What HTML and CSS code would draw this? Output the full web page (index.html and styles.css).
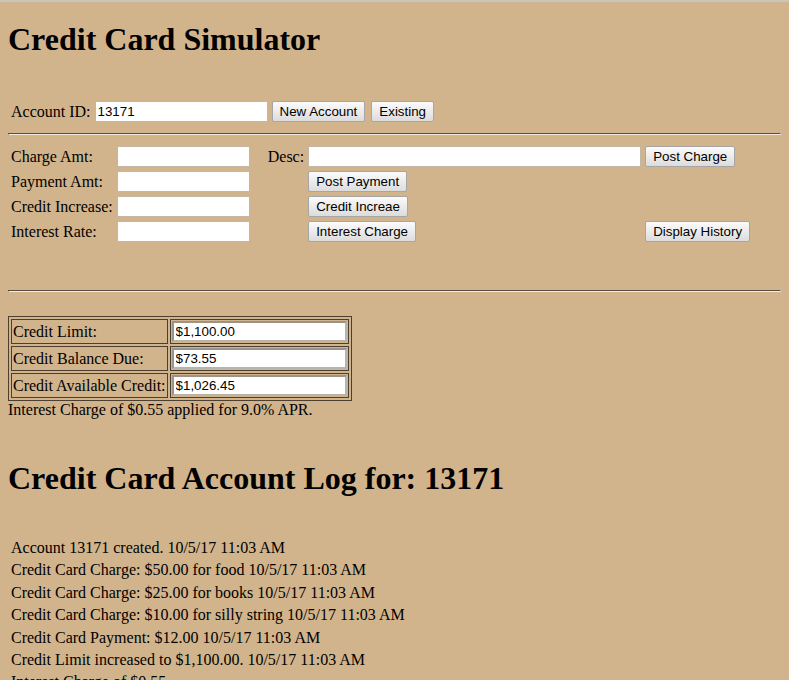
FILE: index.html
```html
<!DOCTYPE html>
<html>
<head>
<meta charset="utf-8">
<title>Credit Card Simulator</title>
<link rel="stylesheet" href="styles.css">
</head>
<body>
<h1 class="title">Credit Card Simulator</h1>
<table class="grid acct">
  <tr>
    <td>Account ID:</td>
    <td><input class="in in-acct" type="text" value="13171"></td>
    <td class="btns"><button class="btn btn-inline">New Account</button> <button class="btn btn-inline btn-gap">Existing</button></td>
  </tr>
</table>
<hr class="rule">
<table class="grid form">
  <tr>
    <td>Charge Amt:</td>
    <td><input class="in in-amt" type="text"></td>
    <td class="desc">Desc:</td>
    <td><input class="in in-desc" type="text"></td>
    <td><button class="btn">Post Charge</button></td>
  </tr>
  <tr>
    <td>Payment Amt:</td>
    <td><input class="in in-amt" type="text"></td>
    <td></td>
    <td><button class="btn">Post Payment</button></td>
    <td></td>
  </tr>
  <tr>
    <td>Credit Increase:</td>
    <td><input class="in in-amt" type="text"></td>
    <td></td>
    <td><button class="btn">Credit Increae</button></td>
    <td></td>
  </tr>
  <tr>
    <td>Interest Rate:</td>
    <td><input class="in in-amt" type="text"></td>
    <td></td>
    <td><button class="btn">Interest Charge</button></td>
    <td><button class="btn">Display History</button></td>
  </tr>
</table>
<hr class="rule">
<table class="stats">
  <tr>
    <td>Credit Limit:</td>
    <td><input class="in in-stat" type="text" value="$1,100.00"></td>
  </tr>
  <tr>
    <td>Credit Balance Due:</td>
    <td><input class="in in-stat" type="text" value="$73.55"></td>
  </tr>
  <tr>
    <td>Credit Available Credit:</td>
    <td><input class="in in-stat" type="text" value="$1,026.45"></td>
  </tr>
</table>
<div class="msg">Interest Charge of $0.55 applied for 9.0% APR.</div>
<h1 class="log-title">Credit Card Account Log for: 13171</h1>
<table class="grid log">
  <tr><td>Account 13171 created. 10/5/17 11:03 AM</td></tr>
  <tr><td>Credit Card Charge: $50.00 for food 10/5/17 11:03 AM</td></tr>
  <tr><td>Credit Card Charge: $25.00 for books 10/5/17 11:03 AM</td></tr>
  <tr><td>Credit Card Charge: $10.00 for silly string 10/5/17 11:03 AM</td></tr>
  <tr><td>Credit Card Payment: $12.00 10/5/17 11:03 AM</td></tr>
  <tr><td>Credit Limit increased to $1,100.00. 10/5/17 11:03 AM</td></tr>
  <tr><td>Interest Charge of $0.55</td></tr>
</table>
</body>
</html>
```
FILE: styles.css
```css
html {
  background: #d2b48c;
  border-top: 2px solid #c9c6c0;
}
body {
  margin: 8px;
  font-family: "Liberation Serif", "Times New Roman", serif;
  font-size: 16px;
  color: #000;
}
h1 {
  font-size: 32px;
  font-weight: bold;
  margin: 0;
  line-height: 37px;
}
.title {
  margin-top: 11px;
}
.grid {
  border-collapse: separate;
  border-spacing: 2px;
}
.grid td {
  padding: 1px;
  vertical-align: middle;
}
.acct {
  margin-top: 40px;
}
.btns {
  white-space: nowrap;
  font-size: 16px;
}
.rule {
  margin: 8px 0;
  border: 1px inset #eee;
  border-top-color: #aa9a86;
  border-left-color: #aa9a86;
  border-bottom-color: #f2ece2;
  border-right-color: #f2ece2;
  height: 0;
}
.form {
  margin-bottom: 45px;
}
.form .desc {
  padding-left: 15px;
}
.in {
  box-sizing: border-box;
  height: 21px;
  margin: 0;
  padding: 1px 2px;
  border: 1px solid #c2b6a4;
  background: #fff;
  font-family: "Liberation Sans", Arial, sans-serif;
  font-size: 13.33px;
  color: #000;
  display: block;
}
.in-acct { width: 173px; }
.in-amt { width: 133px; }
.in-desc { width: 333px; }
.in-stat {
  width: 175px;
  border: 2px solid #9a9488;
  border-bottom-color: #b9b3a8;
  border-right-color: #b9b3a8;
}
.btn {
  display: block;
  height: 21px;
  margin: 0;
  padding: 1px 7px;
  border: 1px solid #a6a6a6;
  border-radius: 2px;
  background: linear-gradient(#fbfbfb, #dcdcdc);
  font-family: "Liberation Sans", Arial, sans-serif;
  font-size: 13.33px;
  color: #000;
  white-space: nowrap;
}
.btn-inline {
  display: inline-block;
  vertical-align: middle;
}
.btn-gap {
  margin-left: 2px;
}
.stats {
  margin-top: 24px;
  border-collapse: separate;
  border-spacing: 2px;
  border: 1px solid #4a3f30;
}
.stats td {
  border: 1px solid #4a3f30;
  padding: 1px;
}
.msg {
  line-height: 18px;
}
.log-title {
  margin-top: 41px;
}
.log {
  margin-top: 39px;
}
.log td {
  line-height: 18.4px;
  white-space: nowrap;
}
```
